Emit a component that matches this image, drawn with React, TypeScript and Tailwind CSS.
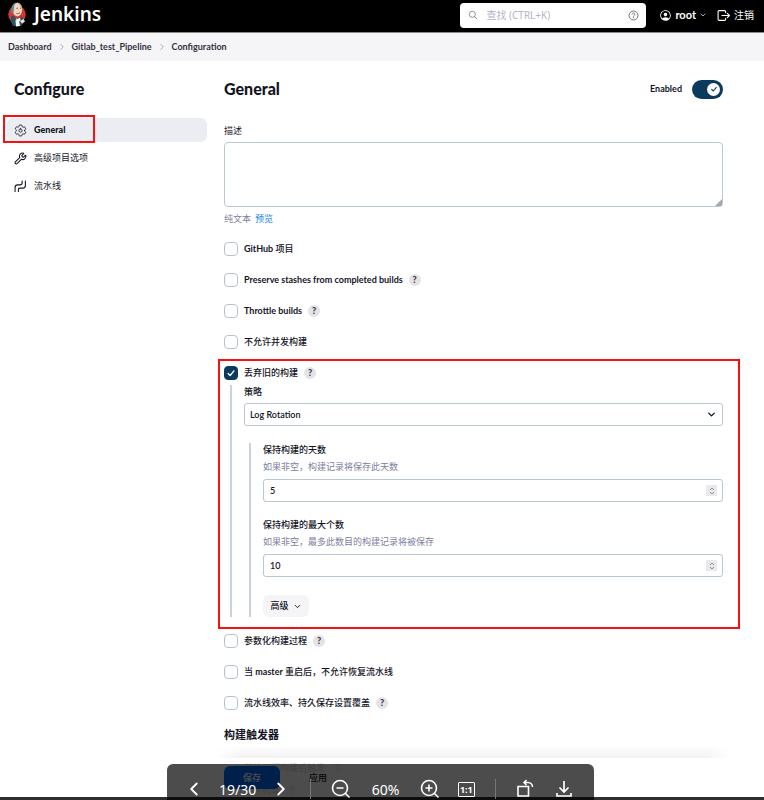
import { ReactNode, useState } from "react";
import { ChevronDown, ChevronLeft, ChevronRight, Wrench } from "lucide-react";
import {
	IoHelpCircleOutline,
	IoPersonCircleOutline,
	IoSearchOutline,
	IoSettingsOutline,
} from "react-icons/io5";

function JenkinsLogo() {
	return (
		<svg viewBox="0 0 36 50" className="h-[25px] w-[18px]" aria-hidden="true">
			<ellipse cx="18" cy="25" rx="17.500" ry="18" fill="#d03a33" />
			<path d="M9 16C8 7 12 2 18 2s10 5 10 13c0 8-4 14-9 14S10 24 9 16Z" fill="#efd6bd" />
			<path d="M8 24C4 14 7 4 16 1c-3 4-4 7-4 12l-1 9Z" fill="#6f8488" />
			<path d="M17 1c7 0 11 5 11 12l-2-1c-1-4-4-8-9-11Z" fill="#c9ab91" />
			<path d="M17 13l3-1m4 0 2 1M17 23c3 1 5 0 7-2" fill="none" stroke="#4b3431" strokeWidth="1.5" />
			<path d="M7 27l6 2 6 3 7-4 4 3 1 11-5 6H10L5 38Z" fill="#335061" />
			<path d="M15 31l4 3 5-3 1 6-6 4Z" fill="#f3f3f2" />
			<path d="M14 27l5 3 7-4 1 6-7-1-5 3Z" fill="#c8322d" />
			<path d="M15 36l7 1 2 11-8 1Z" fill="#f7f7f5" />
			<path d="M24 38l7-4 3 5-6 4Z" fill="#efe4dc" />
		</svg>
	);
}

function PipelineIcon() {
	return (
		<svg viewBox="0 0 24 24" fill="none" stroke="currentColor" strokeWidth="2" strokeLinecap="round" className="size-[13px]" aria-hidden="true">
			<path d="M2 21v-7a5 5 0 0 1 5-5h4a4 4 0 0 0 4-4V2" />
			<path d="M8 21v-3a3 3 0 0 1 3-3h5a5 5 0 0 0 5-5V2" />
		</svg>
	);
}

function SignOutIcon() {
	return (
		<svg viewBox="0 0 24 24" fill="none" stroke="currentColor" strokeWidth="2" strokeLinecap="round" strokeLinejoin="round" className="size-[13px]" aria-hidden="true">
			<path d="M16 7V5a2 2 0 0 0-2-2H4a2 2 0 0 0-2 2v14a2 2 0 0 0 2 2h10a2 2 0 0 0 2-2v-2M9 12h14M19 8l4 4-4 4" />
		</svg>
	);
}

function CheckMark({ className }: { className: string }) {
	return (
		<svg viewBox="0 0 12 12" fill="none" stroke="currentColor" strokeWidth="1.6" strokeLinecap="round" strokeLinejoin="round" className={className} aria-hidden="true">
			<path d="M2.5 6.5 5 9l4.500-5.500" />
		</svg>
	);
}

function Help() {
	return (
		<button type="button" aria-label="Help" className="ml-[6px] flex size-3 items-center justify-center rounded-full bg-[#e4e4e6] text-[9px] leading-none font-black text-[#33333f]">
			?
		</button>
	);
}

function Option({ id, label, help, checked = false }: { id: string; label: ReactNode; help?: boolean; checked?: boolean }) {
	return (
		<div className="flex h-[31px] items-center">
			<span className="relative flex size-[14px]">
				<input
					id={id}
					type="checkbox"
					defaultChecked={checked}
					className="peer size-[14px] appearance-none rounded-[4px] border border-[#b5c3cd] bg-white checked:border-[#0b3a5c] checked:bg-[#0b3a5c]"
				/>
				<CheckMark className="pointer-events-none absolute inset-0 m-auto hidden size-[10px] text-white peer-checked:block" />
			</span>
			<label htmlFor={id} className="pl-[6px] font-medium">
				{label}
			</label>
			{help && <Help />}
		</div>
	);
}

function NumberField({ id, label, hint, value }: { id: string; label: string; hint: string; value: number }) {
	return (
		<div>
			<label htmlFor={id} className="block leading-[14px] font-medium">
				{label}
			</label>
			<p className="mt-[3px] mb-[5px] leading-[14px] text-[#8080a0]">{hint}</p>
			<div className="relative">
				<input
					id={id}
					type="number"
					defaultValue={value}
					className="block h-[23px] w-full appearance-none rounded-[3px] border border-[#b9c7d1] px-[6px] font-semibold [-moz-appearance:textfield] [&::-webkit-inner-spin-button]:appearance-none"
				/>
				<span className="pointer-events-none absolute inset-y-0 right-[6px] my-auto flex h-[11px] w-[11px] items-center justify-center bg-[#e9e9eb] text-[#8d8d93]">
					<svg viewBox="0 0 10 10" fill="none" stroke="currentColor" className="size-[10px]">
						<path d="M3 4l2-2 2 2M3 6l2 2 2-2" />
					</svg>
				</span>
			</div>
		</div>
	);
}

function NavItem({ icon, children, active }: { icon: ReactNode; children: ReactNode; active?: boolean }) {
	return (
		<a
			href="#"
			className={
				active
					? "flex h-6 items-center gap-[7px] rounded-[6px] bg-[#ecedf3] px-[7px] font-black"
					: "flex h-6 items-center gap-[7px] rounded-[6px] px-[7px]"
			}
		>
			{icon}
			{children}
		</a>
	);
}

function Header() {
	return (
		<header className="flex h-[33px] items-center border-b border-[#8a8a8a] bg-black pr-[10px] pl-2 text-white">
			<a href="#" className="flex items-center gap-2 pb-1 font-['Noto_Sans'] text-[19px] leading-6 font-semibold">
				<JenkinsLogo />
				Jenkins
			</a>
			<div className="mb-[2px] ml-auto flex h-[25px] w-[186px] items-center rounded-[4px] bg-white px-2 text-[#55555f]">
				<IoSearchOutline className="size-[10px] shrink-0" />
				<input
					type="search"
					aria-label="查找"
					placeholder="查找 (CTRL+K)"
					className="ml-2 min-w-0 flex-1 font-['Noto_Sans','Noto_Sans_CJK_SC',sans-serif] text-[10px] outline-none placeholder:text-[#b5b5c8]"
				/>
				<IoHelpCircleOutline className="-mr-[2px] size-[13px] shrink-0" />
			</div>
			<button type="button" className="mb-[2px] ml-[13px] flex items-center gap-[3px] text-[11px] font-bold">
				<IoPersonCircleOutline className="size-[13px]" />
				root
				<ChevronDown className="size-2" />
			</button>
			<a href="#" className="mb-[2px] ml-[10px] flex items-center gap-1 text-[10px]">
				<SignOutIcon />
				注销
			</a>
		</header>
	);
}

function Breadcrumbs() {
	return (
		<nav className="flex h-7 items-center gap-[5px] bg-[#f5f5f8] px-2 font-bold text-[#33333f]">
			<a href="#">Dashboard</a>
			<ChevronRight className="size-[10px] text-[#9d9daa]" />
			<a href="#">Gitlab_test_Pipeline</a>
			<ChevronRight className="size-[10px] text-[#9d9daa]" />
			<a href="#">Configuration</a>
		</nav>
	);
}

function Sidebar() {
	return (
		<aside className="w-[207px] shrink-0 pl-[7px]">
			<h1 className="mb-[17px] pl-[7px] text-[16px] leading-6 font-black">Configure</h1>
			<nav className="flex flex-col gap-1">
				<div className="relative">
					<NavItem active icon={<IoSettingsOutline className="size-[13px]" />}>
						General
					</NavItem>
					<div className="pointer-events-none absolute -top-[3px] -bottom-px -left-[4px] w-[92px] border-2 border-[#fb1010]" />
				</div>
				<NavItem icon={<Wrench strokeWidth={2} className="size-[13px]" />}>高级项目选项</NavItem>
				<NavItem icon={<PipelineIcon />}>流水线</NavItem>
			</nav>
		</aside>
	);
}

function DiscardOldBuilds() {
	return (
		<div className="relative mb-2">
			<Option id="discard" label="丢弃旧的构建" help checked />
			<div className="-mt-[3px] ml-[6px] border-l-2 border-[#c8d2da] pl-3">
				<label htmlFor="strategy" className="block leading-[14px] font-medium">
					策略
				</label>
				<div className="relative mt-1">
					<select id="strategy" className="block h-[23px] w-full appearance-none rounded-[3px] border border-[#b9c7d1] bg-white px-[5px] font-semibold">
						<option>Log Rotation</option>
					</select>
					<ChevronDown strokeWidth={3} className="pointer-events-none absolute inset-y-0 right-[6px] my-auto size-[11px]" />
				</div>
				<div className="mt-[17px] ml-[5px] border-l-2 border-[#c8d2da] pl-3">
					<NumberField id="days" label="保持构建的天数" hint="如果非空，构建记录将保存此天数" value={5} />
					<div className="h-4" />
					<NumberField id="count" label="保持构建的最大个数" hint="如果非空，最多此数目的构建记录将被保存" value={10} />
					<button type="button" className="mt-[18px] flex h-[22px] w-[46px] items-center justify-center gap-1 rounded-[6px] bg-[#f5f5f8] font-medium">
						高级
						<ChevronDown strokeWidth={2.5} className="size-[9px]" />
					</button>
				</div>
			</div>
			<div className="pointer-events-none absolute top-[2px] -right-[17px] -bottom-3 -left-[6px] border-2 border-[#fb1010]" />
		</div>
	);
}

function SaveBar() {
	return (
		<div className="absolute inset-x-0 bottom-0 h-[55px] pr-[41px] pl-[224px]">
			<div className="-mx-2 h-[13px] bg-linear-to-b from-white/0 to-[#f2f2f2] mask-x-from-95%" />
			<div className="-mx-2 flex h-[42px] items-start gap-[10px] bg-white/85 px-2 pt-2">
				<button type="button" className="h-[23px] w-14 rounded-[6px] bg-[#006bff] font-medium text-white">
					保存
				</button>
				<button type="button" className="h-[23px] w-14 font-medium">
					应用
				</button>
			</div>
		</div>
	);
}

function ViewerToolbar() {
	const [page] = useState(19);

	return (
		<div className="absolute inset-x-0 bottom-0 flex h-9 justify-center pr-[3px]">
			<div className="flex w-[427px] shrink-0 items-center rounded-t-[6px] bg-black/70 px-5 pt-[14px] font-['Noto_Sans'] text-[14px] text-white">
				<button type="button" aria-label="Previous page">
					<ChevronLeft strokeWidth={2} className="-ml-1 size-[22px]" />
				</button>
				<span className="w-[68px] text-center">{page}/30</span>
				<button type="button" aria-label="Next page">
					<ChevronRight strokeWidth={2} className="size-[22px]" />
				</button>
				<span className="ml-[18px] h-5 w-px bg-[#777777]" />
				<button type="button" aria-label="Zoom out" className="ml-5">
					<svg viewBox="0 0 20 20" fill="none" stroke="currentColor" strokeWidth="1.6" className="size-5">
						<circle cx="9" cy="9" r="7.500" />
						<path d="M5.500 9h7M14.500 14.500 18.500 18.500" />
					</svg>
				</button>
				<span className="w-[71px] text-center">60%</span>
				<button type="button" aria-label="Zoom in">
					<svg viewBox="0 0 20 20" fill="none" stroke="currentColor" strokeWidth="1.6" className="size-5">
						<circle cx="9" cy="9" r="7.500" />
						<path d="M5.500 9h7M9 5.500v7M14.500 14.500 18.500 18.500" />
					</svg>
				</button>
				<button type="button" className="ml-[18px] flex h-[15px] w-[18px] items-center justify-center rounded-[1px] border border-white text-[9px] leading-none font-bold">
					1:1
				</button>
				<span className="ml-5 h-5 w-px bg-[#777777]" />
				<button type="button" aria-label="Rotate" className="ml-5">
					<svg viewBox="0 0 20 20" fill="none" stroke="currentColor" strokeWidth="1.6" className="size-5">
						<path d="M2 7.500h10.500V17H2ZM8 3.500h4a4.500 4.500 0 0 1 4.500 4.500M10.500 1 8 3.500 10.500 6" />
					</svg>
				</button>
				<button type="button" aria-label="Download" className="ml-[18px]">
					<svg viewBox="0 0 20 20" fill="none" stroke="currentColor" strokeWidth="1.7" className="size-5">
						<path d="M10 2v11M5.500 8.500 10 13l4.500-4.500M3 14v3h14v-3" />
					</svg>
				</button>
			</div>
		</div>
	);
}

export default function App() {
	return (
		<div className="relative flex h-screen flex-col overflow-hidden bg-white font-['Lato','Noto_Sans_CJK_SC',sans-serif] text-[9px] text-[#14141f]">
			<Header />
			<Breadcrumbs />
			<div className="flex min-h-0 flex-1 pt-4">
				<Sidebar />
				<main className="min-w-0 flex-1 pr-[41px] pl-[17px]">
					<div className="flex h-6 items-center justify-between">
						<h2 className="text-[16px] leading-6 font-black">General</h2>
						<label className="flex items-center gap-[10px] font-bold">
							Enabled
							<span className="relative flex">
								<input type="checkbox" role="switch" defaultChecked className="h-[19px] w-[31px] appearance-none rounded-full bg-[#0b3a5c]" />
								<span className="pointer-events-none absolute inset-y-0 right-[3px] my-auto flex size-[13px] items-center justify-center rounded-full bg-white text-[#0b3a5c]">
									<CheckMark className="size-2" />
								</span>
							</span>
						</label>
					</div>
					<label htmlFor="description" className="mt-[23px] block leading-[14px]">
						描述
					</label>
					<div className="relative mt-1">
						<textarea id="description" className="block h-[65px] w-full resize-none rounded-[4px] border border-[#b9c7d1]" />
						<svg viewBox="0 0 7 7" className="pointer-events-none absolute right-px bottom-px size-[7px]" aria-hidden="true">
							<path d="M7 0v7H0Z" fill="#a9a9ad" />
						</svg>
					</div>
					<div className="mt-[5px] flex gap-1 leading-[14px] text-[#8080a0]">
						纯文本
						<a href="#" className="text-[#1683e8]">
							预览
						</a>
					</div>
					<div className="mt-[7px]">
						<Option id="github" label={<><b>GitHub</b> 项目</>} />
						<Option id="stashes" label={<b>Preserve stashes from completed builds</b>} help />
						<Option id="throttle" label={<b>Throttle builds</b>} help />
						<Option id="concurrent" label="不允许并发构建" />
						<DiscardOldBuilds />
						<Option id="params" label="参数化构建过程" help />
						<Option id="resume" label={<>当 <b>master</b> 重启后，不允许恢复流水线</>} />
						<Option id="durability" label="流水线效率、持久保存设置覆盖" help />
					</div>
					<h2 className="mt-[7px] mb-[7px] text-[11px] leading-5 font-bold">构建触发器</h2>
					<div className="-space-y-2">
						<Option id="upstream" label="其他工程构建后触发" help />
						<Option id="timer" label="定时构建" help />
					</div>
				</main>
			</div>
			<SaveBar />
			<div className="absolute inset-x-0 bottom-0 h-[3px] bg-[#2c2e30]" />
			<ViewerToolbar />
		</div>
	);
}
